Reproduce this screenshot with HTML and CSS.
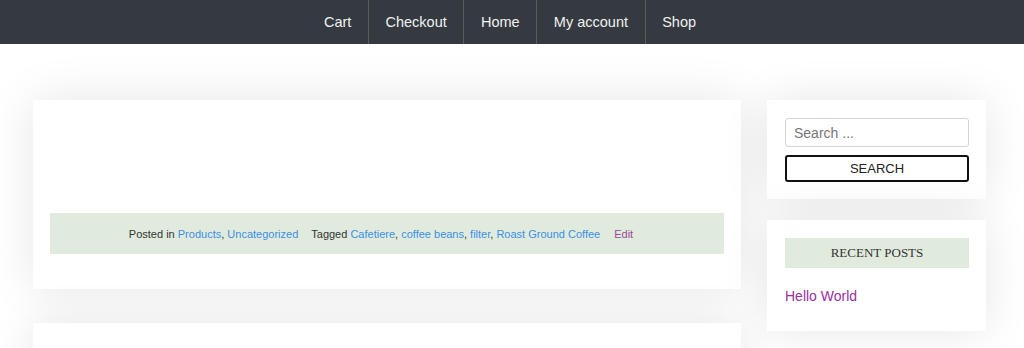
FILE: index.html
```html
<!DOCTYPE html>
<html>
<head>
<meta charset="utf-8">
<link rel="stylesheet" href="styles.css">
</head>
<body>
<nav class="topnav">
  <a class="nav-item" href="#">Cart</a>
  <a class="nav-item" href="#">Checkout</a>
  <a class="nav-item" href="#">Home</a>
  <a class="nav-item" href="#">My account</a>
  <a class="nav-item" href="#">Shop</a>
</nav>
<div class="page">
  <main class="main">
    <article class="card post">
      <div class="post-body"></div>
      <footer class="post-meta">
        <span class="meta-group">Posted in <a class="link" href="#">Products</a>, <a class="link" href="#">Uncategorized</a></span>
        <span class="meta-group">Tagged <a class="link" href="#">Cafetiere</a>, <a class="link" href="#">coffee beans</a>, <a class="link" href="#">filter</a>, <a class="link" href="#">Roast Ground Coffee</a></span>
        <a class="edit" href="#">Edit</a>
      </footer>
    </article>
    <article class="card post next"></article>
  </main>
  <aside class="sidebar">
    <section class="card widget">
      <input class="search-input" type="text" placeholder="Search ...">
      <button class="search-btn">SEARCH</button>
    </section>
    <section class="card widget">
      <h2 class="widget-title">RECENT POSTS</h2>
      <a class="recent" href="#">Hello World</a>
    </section>
  </aside>
</div>
</body>
</html>
```
FILE: styles.css
```css
* { box-sizing: border-box; }
html, body { margin: 0; padding: 0; background: #fff; height: 348px; overflow: hidden; }
body { font-family: "Liberation Sans", Arial, sans-serif; color: #333; }

.topnav {
  height: 44px;
  background: #343a40;
  display: flex;
  justify-content: center;
  align-items: stretch;
  padding-right: 4px;
}
.nav-item {
  display: flex;
  align-items: center;
  padding: 0 16.6px;
  color: #f1f1f1;
  font-size: 14.5px;
  text-decoration: none;
}
.nav-item + .nav-item { border-left: 1px solid #5a5e63; }

.page {
  display: flex;
  gap: 26px;
  padding: 56px 38px 0 33px;
}
.main { width: 708px; display: flex; flex-direction: column; gap: 34px; }
.sidebar { width: 219px; display: flex; flex-direction: column; gap: 21px; }

.card {
  background: #fff;
  box-shadow: 0 0 45px rgba(0,0,0,0.1);
}
.post { padding: 17px 17px 35px; }
.post-body { height: 96px; }
.post-meta {
  background: #e0ebde;
  height: 41px;
  display: flex;
  align-items: center;
  justify-content: center;
  gap: 13px;
  padding-right: 12px;
  font-size: 11px;
  color: #333;
}
.link { color: #3b8ee6; text-decoration: none; }
.edit { color: #9a489a; text-decoration: none; margin-left: 1px; }
.post.next { height: 60px; }

.widget { padding: 18px 17px 17px 18px; }
.search-input {
  display: block;
  width: 184px;
  height: 29px;
  border: 1px solid #d5d5d5;
  border-radius: 3px;
  padding: 0 8px;
  font-family: "Liberation Sans", Arial, sans-serif;
  font-size: 14px;
  color: #333;
  outline: none;
}
.search-input::placeholder { color: #777; }
.search-btn {
  display: block;
  margin-top: 8px;
  width: 184px;
  height: 27px;
  border: 2px solid #111;
  border-radius: 3px;
  background: #fff;
  font-family: "Liberation Sans", Arial, sans-serif;
  font-size: 13px;
  color: #222;
  padding: 0;
}
.widget-title {
  margin: 0;
  height: 30px;
  width: 184px;
  background: #e0ebde;
  font-family: "Liberation Serif", "Times New Roman", serif;
  font-weight: normal;
  font-size: 13px;
  color: #333;
  display: flex;
  align-items: center;
  justify-content: center;
}
.recent {
  display: block;
  margin-top: 20px;
  padding-bottom: 10px;
  font-size: 14px;
  color: #9b2f9f;
  text-decoration: none;
}
```
